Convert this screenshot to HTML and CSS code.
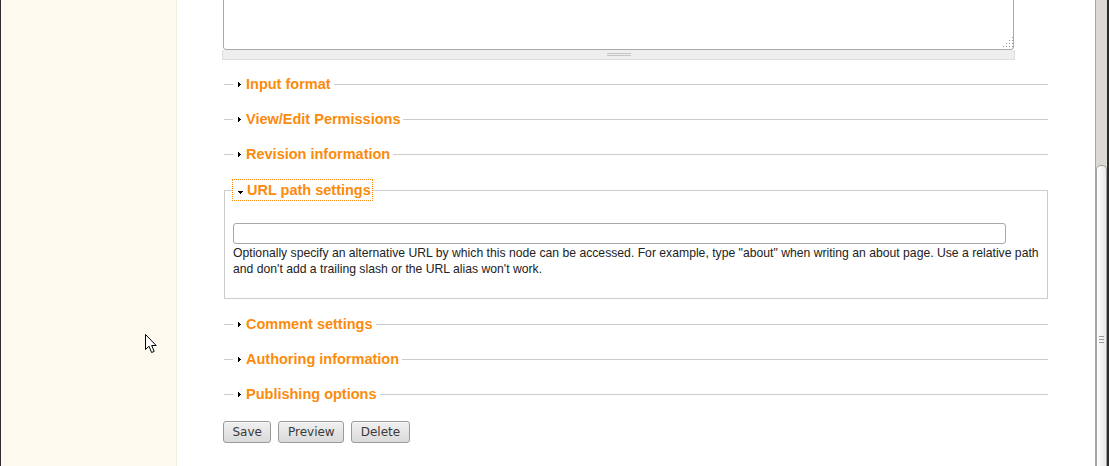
FILE: index.html
```html
<!DOCTYPE html>
<html>
<head>
<meta charset="utf-8">
<title>Edit node</title>
<link rel="stylesheet" href="styles.css">
</head>
<body>
<div class="page">
  <div class="edge"></div>
  <aside class="sidebar"></aside>
  <main class="main">
    <div class="content">
      <div class="ta-wrap">
        <div class="ta-box">
          <textarea class="ta"></textarea>
          <svg class="ta-grip" width="10" height="10" viewBox="0 0 10 10">
            <g fill="#9a9a9a">
              <rect x="9" y="0" width="1" height="1"/>
              <rect x="6" y="3" width="1" height="1"/><rect x="9" y="3" width="1" height="1"/>
              <rect x="3" y="6" width="1" height="1"/><rect x="6" y="6" width="1" height="1"/><rect x="9" y="6" width="1" height="1"/>
              <rect x="0" y="9" width="1" height="1"/><rect x="3" y="9" width="1" height="1"/><rect x="6" y="9" width="1" height="1"/><rect x="9" y="9" width="1" height="1"/>
            </g>
          </svg>
        </div>
        <div class="grippie"><span class="grippie-lines"></span></div>
      </div>

      <div class="fieldsets">
        <fieldset class="fs collapsed">
          <legend class="lg"><a class="lg-link" href="#"><svg class="arr" width="3" height="5" viewBox="0 0 3 5"><path d="M0 0h1v5H0zM1 1h1v3H1zM2 2h1v1H2z"/></svg>Input format</a></legend>
        </fieldset>
        <fieldset class="fs collapsed">
          <legend class="lg"><a class="lg-link" href="#"><svg class="arr" width="3" height="5" viewBox="0 0 3 5"><path d="M0 0h1v5H0zM1 1h1v3H1zM2 2h1v1H2z"/></svg>View/Edit Permissions</a></legend>
        </fieldset>
        <fieldset class="fs collapsed">
          <legend class="lg"><a class="lg-link" href="#"><svg class="arr" width="3" height="5" viewBox="0 0 3 5"><path d="M0 0h1v5H0zM1 1h1v3H1zM2 2h1v1H2z"/></svg>Revision information</a></legend>
        </fieldset>

        <fieldset class="fs expanded">
          <legend class="lg"><a class="lg-link focused" href="#"><svg class="arr arr-down" width="5" height="3" viewBox="0 0 5 3"><path d="M0 0h5v1H0zM1 1h3v1H1zM2 2h1v1H2z"/></svg>URL path settings</a></legend>
          <input class="text-in" type="text">
          <div class="desc">Optionally specify an alternative URL by which this node can be accessed. For example, type "about" when writing an about page. Use a relative path and don't add a trailing slash or the URL alias won't work.</div>
        </fieldset>

        <fieldset class="fs collapsed">
          <legend class="lg"><a class="lg-link" href="#"><svg class="arr" width="3" height="5" viewBox="0 0 3 5"><path d="M0 0h1v5H0zM1 1h1v3H1zM2 2h1v1H2z"/></svg>Comment settings</a></legend>
        </fieldset>
        <fieldset class="fs collapsed">
          <legend class="lg"><a class="lg-link" href="#"><svg class="arr" width="3" height="5" viewBox="0 0 3 5"><path d="M0 0h1v5H0zM1 1h1v3H1zM2 2h1v1H2z"/></svg>Authoring information</a></legend>
        </fieldset>
        <fieldset class="fs collapsed">
          <legend class="lg"><a class="lg-link" href="#"><svg class="arr" width="3" height="5" viewBox="0 0 3 5"><path d="M0 0h1v5H0zM1 1h1v3H1zM2 2h1v1H2z"/></svg>Publishing options</a></legend>
        </fieldset>
      </div>

      <div class="buttons">
        <button class="btn" type="button">Save</button>
        <button class="btn" type="button">Preview</button>
        <button class="btn" type="button">Delete</button>
      </div>
    </div>
  </main>
  <div class="scrollbar"><div class="thumb"><span class="thumb-grip"></span></div></div>
</div>
<svg class="cursor" width="13" height="21" viewBox="0 0 13 21">
  <path d="M0.5 0.5 L0.5 15.5 L4 12.2 L6.6 18.5 L9.2 17.4 L6.7 11.5 L11.2 11.5 Z" fill="#fff" stroke="#000" stroke-width="1" stroke-linejoin="miter"/>
</svg>
</body>
</html>
```

FILE: styles.css
```css
html, body {
  margin: 0;
  padding: 0;
  height: 100%;
  overflow: hidden;
}

body {
  position: relative;
  background: #fff;
  font-family: "Liberation Sans", Arial, sans-serif;
  color: #222;
}

.page {
  display: flex;
  height: 466px;
}

.edge {
  width: 1px;
  background: #2d2d2d;
}

.sidebar {
  width: 175px;
  background: #fef9ee;
  border-right: 1px solid #f3eee2;
}

.main {
  flex: 1;
  min-width: 0;
  overflow: hidden;
}

.content {
  padding-left: 45px;
  width: 830px;
}

/* textarea */
.ta-wrap {
  width: 793px;
  margin-top: -60px;
}

.ta-box {
  position: relative;
  padding: 0 1px;
}

.ta {
  display: block;
  box-sizing: border-box;
  width: 791px;
  height: 110px;
  margin: 0;
  padding: 2px;
  border: 1px solid #a9a9a9;
  border-radius: 3px;
  background: #fff;
  resize: none;
  outline: none;
}

.ta-grip {
  position: absolute;
  right: 2px;
  bottom: 3px;
}

.grippie {
  height: 9px;
  background: #eee;
  border: 1px solid #ddd;
  border-top: 0;
  display: flex;
  justify-content: center;
}

.grippie-lines {
  display: block;
  width: 24px;
  height: 1px;
  margin-top: 3px;
  border-top: 1px solid #c4c4c4;
  border-bottom: 1px solid #c4c4c4;
}

/* fieldsets */
.fieldsets {
  padding-top: 14px;
}

.fs {
  box-sizing: border-box;
  width: 824px;
  min-width: 0;
  margin: 0 0 15px 2px;
  border: 0;
  border-top: 1px solid #ccc;
  padding: 0 0 0 9px;
}

.fs.expanded {
  margin-top: 16px;
  border: 1px solid #ccc;
  padding: 23px 4px 21px 8px;
}

.lg {
  display: block;
  padding: 0;
  height: 20px;
  line-height: 20px;
  font-size: 14.5px;
  font-weight: bold;
}

.lg-link {
  display: flex;
  align-items: center;
  height: 20px;
  padding-right: 3px;
  color: #fb8b0d;
  text-decoration: none;
}

.lg-link.focused {
  padding-right: 1px;
  outline: 1px dotted #fb8b0d;
}

.arr {
  display: block;
  flex: none;
  margin: 0 5px 0 5px;
  fill: #000;
}

.arr-down {
  margin: 4px 4px 0 5px;
}

.text-in {
  display: block;
  box-sizing: border-box;
  width: 773px;
  height: 21px;
  margin: 0;
  padding: 0 3px;
  border: 1px solid #a8a8a8;
  border-radius: 3px;
  background: #fff;
  outline: none;
}

.desc {
  margin-top: 1px;
  font-size: 12.2px;
  line-height: 16px;
  color: #222;
}

/* buttons */
.buttons {
  display: flex;
  gap: 7px;
  margin-top: 17px;
  padding-left: 1px;
}

.btn {
  height: 22px;
  padding: 0 8.5px;
  margin: 0;
  font-family: "DejaVu Sans", sans-serif;
  font-size: 12px;
  color: #3a3a3a;
  border: 1px solid #9a9a9a;
  border-radius: 3px;
  background: linear-gradient(#f0f0f0, #dadada);
  box-shadow: inset 0 1px 0 #fafafa;
}

/* scrollbar */
.scrollbar {
  width: 11px;
  border-left: 1px solid #a6a6a6;
  border-right: 2px solid #2b2b2b;
  background: #dcd9d5;
  display: flex;
  flex-direction: column;
}

.thumb {
  flex: 1;
  margin-top: 165px;
  border: 1px solid #a3a3a3;
  border-bottom: 0;
  border-radius: 5px 5px 0 0;
  background: linear-gradient(to right, #fdfdfd, #e8e8e8);
  display: flex;
  justify-content: center;
}

.thumb-grip {
  display: block;
  width: 5px;
  height: 7px;
  margin-top: 170px;
  background: repeating-linear-gradient(#9a9a9a 0 1px, transparent 1px 3px);
}

.cursor {
  position: absolute;
  left: 145px;
  top: 334px;
}
```
